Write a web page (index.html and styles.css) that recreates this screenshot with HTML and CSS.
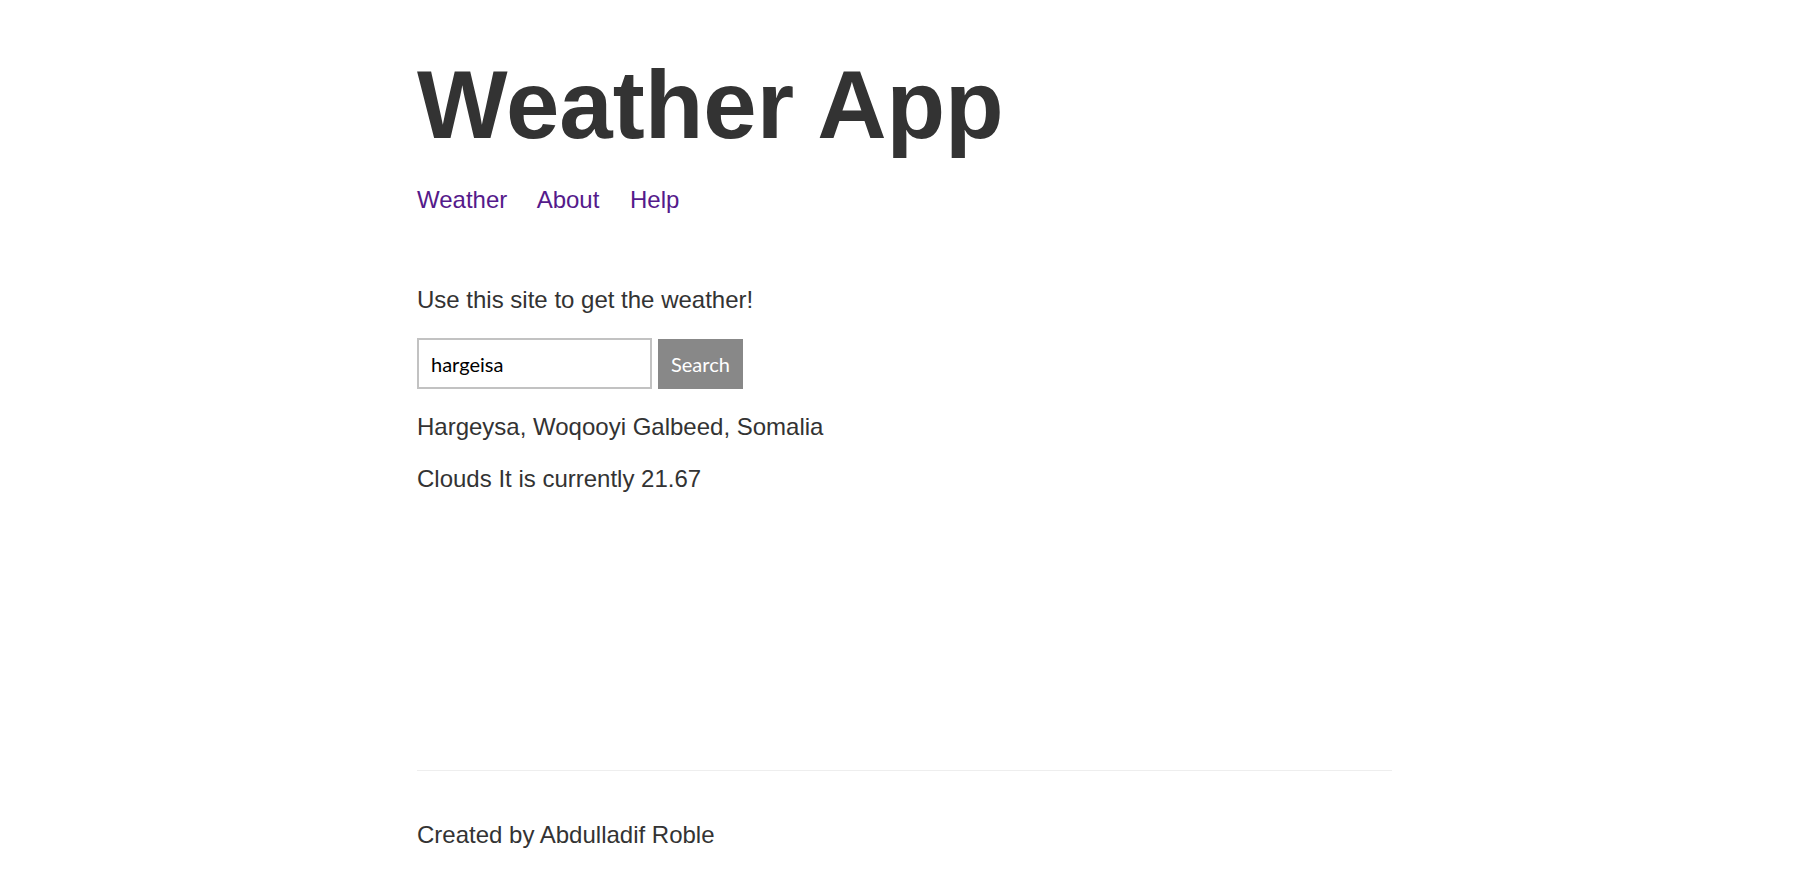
FILE: index.html
```html
<!DOCTYPE html>
<html lang="en">
<head>
<meta charset="utf-8">
<title>Weather</title>
<link rel="stylesheet" href="styles.css">
</head>
<body>
  <div class="main-content">
    <header class="site-header">
      <h1 class="title">Weather App</h1>
      <nav class="nav">
        <a class="nav-link" href="#">Weather</a>
        <a class="nav-link" href="#">About</a>
        <a class="nav-link" href="#">Help</a>
      </nav>
    </header>
    <p class="text">Use this site to get the weather!</p>
    <form class="search-form">
      <input class="search-input" type="text" value="hargeisa" placeholder="Location">
      <button class="search-button" type="button">Search</button>
    </form>
    <p class="text">Hargeysa, Woqooyi Galbeed, Somalia</p>
    <p class="text">Clouds It is currently 21.67</p>
  </div>
  <footer class="site-footer">
    <p class="text">Created by Abdulladif Roble</p>
  </footer>
</body>
</html>
```

FILE: styles.css
```css
html, body {
  margin: 0;
}

body {
  color: #333333;
  font-family: "Liberation Sans", Arial, sans-serif;
  font-size: 24px;
  max-width: 975px;
  margin: 0 auto;
  padding: 0 24px;
  display: flex;
  flex-direction: column;
  min-height: 100vh;
}

.main-content {
  flex-grow: 1;
}

.site-header {
  padding-top: 24px;
  padding-bottom: 48px;
}

.title {
  font-size: 96px;
  font-weight: bold;
  margin: 26px 0 26px;
}

.nav-link {
  color: #551a8b;
  text-decoration: none;
  margin-right: 24px;
}

.text {
  margin: 24px 0;
}

.search-form {
  display: flex;
  align-items: center;
  gap: 6px;
}

.search-input {
  box-sizing: border-box;
  width: 235px;
  height: 51px;
  border: 2px solid #c2c2c2;
  padding: 0 12px;
  font-family: Lato, "Open Sans", sans-serif;
  font-size: 20px;
  color: #000000;
  background: #ffffff;
  outline: none;
}

.search-button {
  box-sizing: border-box;
  height: 50px;
  padding: 0 11px;
  border: 2px solid #888888;
  background: #888888;
  color: #ffffff;
  font-family: Lato, "Open Sans", sans-serif;
  font-size: 20px;
  cursor: pointer;
}

.site-footer {
  border-top: 1px solid #eeeeee;
  margin-top: 24px;
  padding: 26px 0 10px;
}
```
